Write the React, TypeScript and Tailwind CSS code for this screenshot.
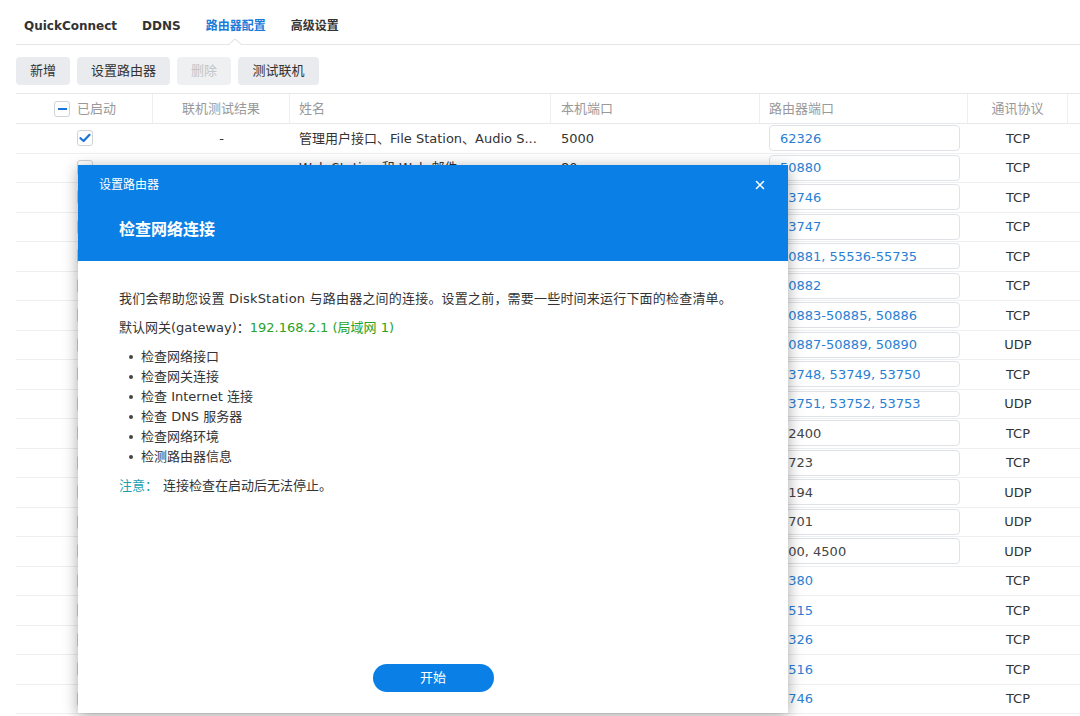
import React from "react";
import { X } from "lucide-react";

const FONT = { fontFamily: '"DejaVu Sans", "Noto Sans CJK SC", sans-serif' };

type Row = {
  on: boolean;
  name: string;
  local: string;
  router: string;
  proto: string;
  blue: boolean;
  box: boolean;
};

const rows: Row[] = [
  { on: true, name: "管理用户接口、File Station、Audio S...", local: "5000", router: "62326", proto: "TCP", blue: true, box: true },
  { on: false, name: "Web Station 和 Web 邮件", local: "80", router: "50880", proto: "TCP", blue: true, box: true },
  { on: false, name: "Photo Station", local: "443", router: "53746", proto: "TCP", blue: true, box: true },
  { on: false, name: "Synology Drive", local: "6690", router: "53747", proto: "TCP", blue: true, box: true },
  { on: false, name: "FTP 服务器", local: "21, 55536-55735", router: "50881, 55536-55735", proto: "TCP", blue: true, box: true },
  { on: false, name: "SSH", local: "22", router: "50882", proto: "TCP", blue: true, box: true },
  { on: false, name: "Windows 文件服务器", local: "137-139, 445", router: "50883-50885, 50886", proto: "TCP", blue: true, box: true },
  { on: false, name: "Windows 文件服务器", local: "137-139, 445", router: "50887-50889, 50890", proto: "UDP", blue: true, box: true },
  { on: false, name: "Mac 文件服务器", local: "548, 549, 550", router: "53748, 53749, 53750", proto: "TCP", blue: true, box: true },
  { on: false, name: "Bonjour", local: "5353, 5354, 5355", router: "53751, 53752, 53753", proto: "UDP", blue: true, box: true },
  { on: false, name: "Cloud Station", local: "12400", router: "12400", proto: "TCP", blue: false, box: true },
  { on: false, name: "VPN Server (PPTP)", local: "1723", router: "1723", proto: "TCP", blue: false, box: true },
  { on: false, name: "VPN Server (OpenVPN)", local: "1194", router: "1194", proto: "UDP", blue: false, box: true },
  { on: false, name: "VPN Server (L2TP)", local: "1701", router: "1701", proto: "UDP", blue: false, box: true },
  { on: false, name: "VPN Server (IPSec)", local: "500, 4500", router: "500, 4500", proto: "UDP", blue: false, box: true },
  { on: false, name: "Surveillance Station", local: "9900", router: "3380", proto: "TCP", blue: true, box: false },
  { on: false, name: "Audio Station", local: "8800", router: "5515", proto: "TCP", blue: true, box: false },
  { on: false, name: "Download Station", local: "8000", router: "6326", proto: "TCP", blue: true, box: false },
  { on: false, name: "Video Station", local: "9007", router: "5516", proto: "TCP", blue: true, box: false },
  { on: false, name: "Note Station", local: "9350", router: "3746", proto: "TCP", blue: true, box: false },
];

function Check({ on }: { on: boolean }) {
  return (
    <div className="w-[16px] h-[16px] rounded-[3px] border border-[#cfd3d8] bg-white flex items-center justify-center">
      {on && (
        <svg width="12" height="10" viewBox="0 0 12 10">
          <path d="M1.5 5.2 L4.6 8 L10.5 1.8" fill="none" stroke="#1a73d9" strokeWidth="2.2" strokeLinecap="round" strokeLinejoin="round" />
        </svg>
      )}
    </div>
  );
}

export default function App() {
  return (
    <div className="relative w-[1080px] h-[716px] overflow-hidden bg-white text-[#333]" style={FONT}>
      {/* Tabs */}
      <div className="relative ml-[16px] h-[45px] border-b border-[#e4e6e9] flex items-center pl-[8px] pt-[8px] gap-[25px] text-[12px] font-bold">
        <span className="text-[#333]">QuickConnect</span>
        <span className="text-[#333]">DDNS</span>
        <span className="text-[#1a7bd9]">路由器配置</span>
        <span className="text-[#333]">高级设置</span>
        <svg className="absolute left-[212px] top-[38px] z-10" width="14" height="8" viewBox="0 0 14 8">
          <path d="M0 7 L7 1 L14 7 Z" fill="#ffffff" />
          <path d="M0 7 L7 1 L14 7" fill="none" stroke="#d8dbe0" strokeWidth="1" />
        </svg>
      </div>

      {/* Toolbar */}
      <div className="ml-[16px] mt-[12px] flex gap-[7px] text-[13px]">
        <button className="h-[28px] w-[54px] rounded-[4px] bg-[#e9ebee] text-[#333]">新增</button>
        <button className="h-[28px] w-[93px] rounded-[4px] bg-[#e9ebee] text-[#333]">设置路由器</button>
        <button className="h-[28px] w-[54px] rounded-[4px] bg-[#eef0f2] text-[#c2c5c9]">删除</button>
        <button className="h-[28px] w-[81px] rounded-[4px] bg-[#e9ebee] text-[#333]">测试联机</button>
      </div>

      {/* Table */}
      <div className="ml-[16px] mt-[8px] w-[1100px] text-[13px]">
        <div className="flex h-[31px] border-t border-b border-[#e6e8eb] text-[#999] items-stretch">
          <div className="w-[137px] flex items-center pl-[38px] gap-[7px] border-r border-[#eceef0]">
            <div className="w-[16px] h-[16px] rounded-[3px] border border-[#cfd3d8] bg-white flex items-center justify-center">
              <div className="w-[9px] h-[2px] bg-[#1a73d9]" />
            </div>
            <span>已启动</span>
          </div>
          <div className="w-[137px] flex items-center justify-center border-r border-[#eceef0]">联机测试结果</div>
          <div className="w-[261px] flex items-center pl-[9px] border-r border-[#eceef0]">姓名</div>
          <div className="w-[209px] flex items-center pl-[10px] border-r border-[#eceef0]">本机端口</div>
          <div className="w-[208px] flex items-center pl-[9px] border-r border-[#eceef0]">路由器端口</div>
          <div className="w-[100px] flex items-center justify-center border-r border-[#eceef0]">通讯协议</div>
          <div className="flex-1" />
        </div>
        {rows.map((r, i) => (
          <div key={i} className="flex h-[29.5px] border-b border-[#eeeff1] items-center">
            <div className="w-[137px] pl-[61px]">
              <Check on={r.on} />
            </div>
            <div className="w-[137px] text-center">-</div>
            <div className="w-[261px] pl-[9px] whitespace-nowrap overflow-hidden">{r.name}</div>
            <div className="w-[209px] pl-[10px] whitespace-nowrap">{r.local}</div>
            <div className="w-[208px] pl-[9px] pr-[8px]">
              <div
                className={
                  "h-[26px] rounded-[4px] flex items-center pl-[10px] whitespace-nowrap " +
                  (r.box ? "border border-[#dfe2e6] " : "border border-transparent ") +
                  (r.blue ? "text-[#2a7fd4]" : "text-[#444]")
                }
              >
                {r.router}
              </div>
            </div>
            <div className="w-[100px] text-center">{r.proto}</div>
          </div>
        ))}
      </div>

      {/* Dialog */}
      <div className="absolute left-[78px] top-[165px] w-[710px] h-[548px] bg-white flex flex-col shadow-[0_3px_14px_rgba(0,0,0,0.35)]">
        <div className="relative h-[96px] bg-[#0a7fe6] text-white shrink-0">
          <div className="pl-[21px] pt-[12px] text-[12px] leading-[16px]">设置路由器</div>
          <div className="pl-[41px] mt-[25px] text-[16px] leading-[24px] font-bold">检查网络连接</div>
          <X className="absolute right-[21px] top-[13px]" size={14} strokeWidth={2.6} color="#ffffff" />
        </div>
        <div className="flex-1 flex flex-col px-[41px] pt-[28px] text-[13px] leading-[20px] text-[#333]">
          <p className="tracking-[0.2px]">我们会帮助您设置 DiskStation 与路由器之间的连接。设置之前，需要一些时间来运行下面的检查清单。</p>
          <p className="mt-[9px]">
            默认网关(gateway)：<span className="text-[#27a327]">192.168.2.1 (局域网 1)</span>
          </p>
          <ul className="mt-[9px] pl-[10px]">
            {["检查网络接口", "检查网关连接", "检查 Internet 连接", "检查 DNS 服务器", "检查网络环境", "检测路由器信息"].map((t) => (
              <li key={t} className="flex items-center gap-[8px]">
                <span className="w-[4px] h-[4px] rounded-full bg-[#444] shrink-0" />
                <span>{t}</span>
              </li>
            ))}
          </ul>
          <p className="mt-[9px]">
            <span className="text-[#1a9fb3]">注意：</span>
            <span className="ml-[5px]">连接检查在启动后无法停止。</span>
          </p>
          <div className="flex-1" />
          <div className="flex justify-center pb-[21px]">
            <button className="w-[121px] h-[28px] rounded-full bg-[#0a7fe6] text-white text-[13px]">开始</button>
          </div>
        </div>
      </div>
    </div>
  );
}
